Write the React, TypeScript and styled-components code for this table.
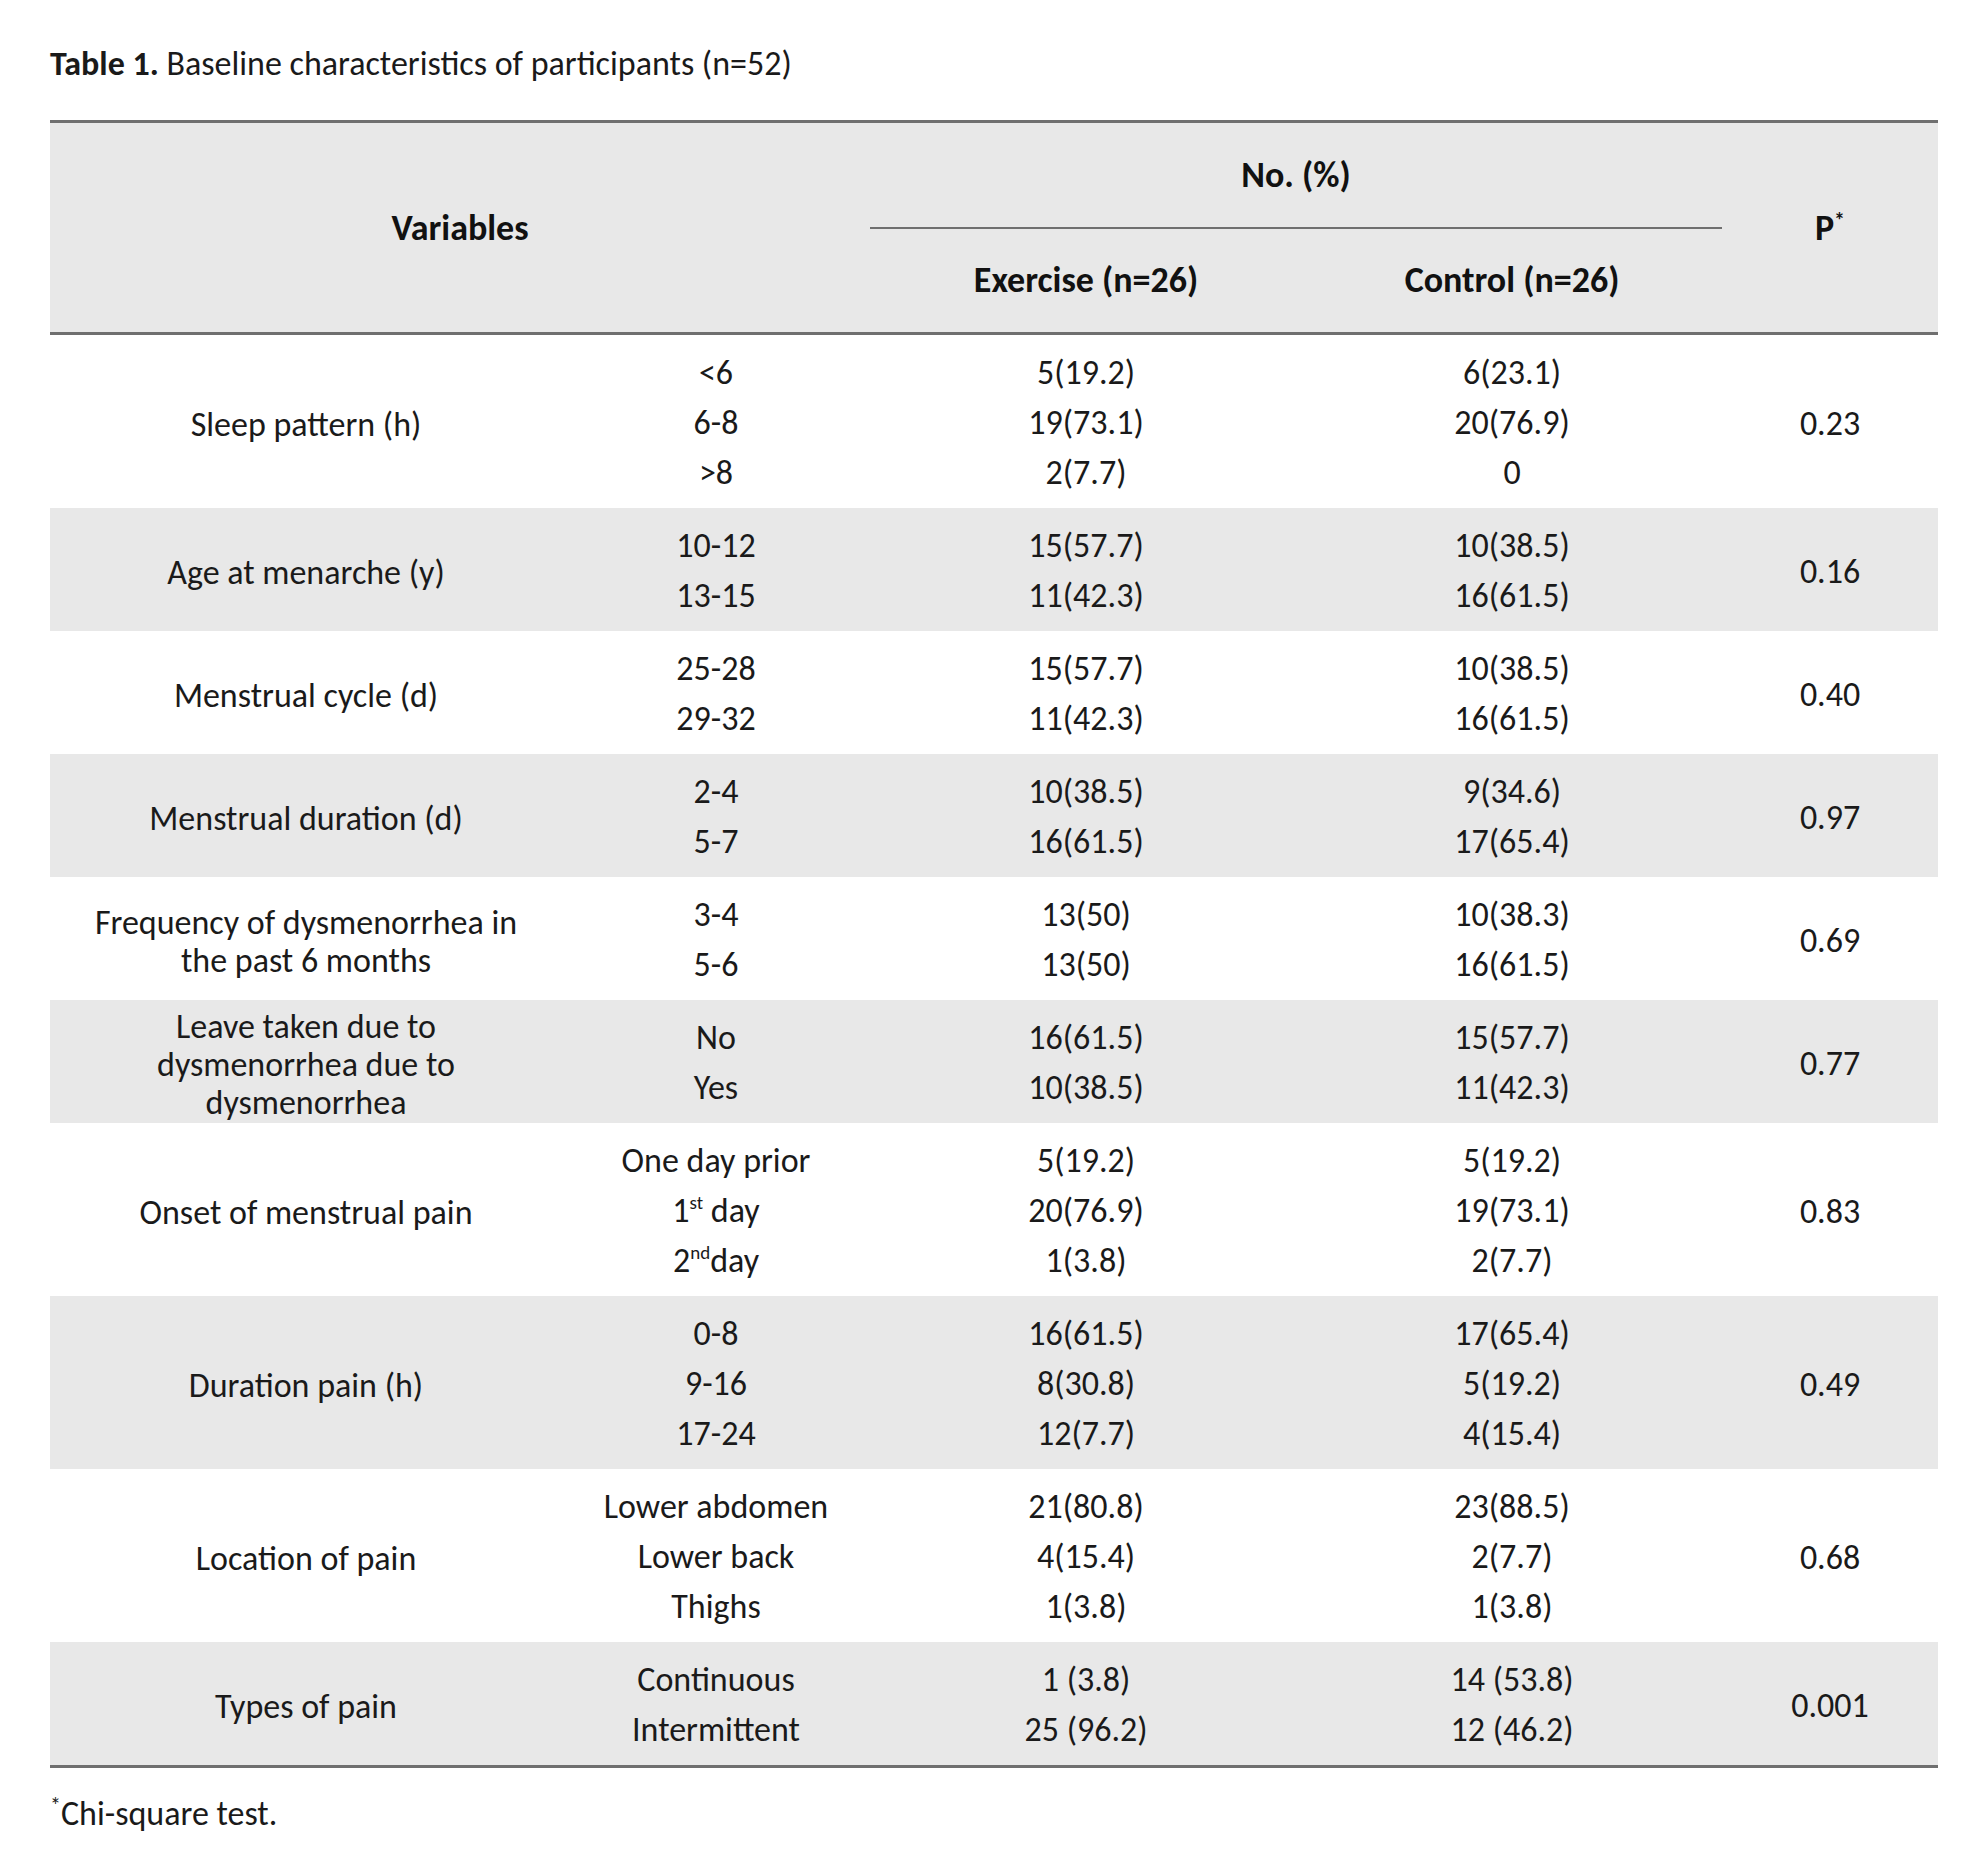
import { createGlobalStyle, styled } from 'styled-components'
import type { ReactNode } from 'react'

const GlobalStyle = createGlobalStyle`
  body {
    margin: 0;
    background: #ffffff;
    font-family: Carlito, Calibri, Lato, "Liberation Sans", sans-serif;
    color: #1a1a1a;
  }
`

const Page = styled.div`
  padding: 44px 0 40px 50px;
  width: 1888px;
`

const Caption = styled.div`
  font-size: 34px;
  line-height: 40px;
  margin-bottom: 36px;
  b {
    font-weight: 700;
  }
`

const Table = styled.table`
  width: 1888px;
  border-collapse: collapse;
  table-layout: fixed;
  font-size: 34px;
`

const HeadRow = styled.tr`
  background: #e8e8e8;
  height: 106px;
`

const Th = styled.th<{ $line?: boolean }>`
  font-weight: 700;
  font-size: 36px;
  text-align: center;
  vertical-align: middle;
  padding: 0;
  color: #111;
  ${(p) => (p.$line ? 'border-bottom: 2px solid #6f6f6f;' : '')}
  sup {
    font-size: 22px;
    vertical-align: 12px;
    line-height: 0;
  }
`

const THead = styled.thead`
  border-top: 3px solid #6f6f6f;
  border-bottom: 3px solid #6f6f6f;
`

const TBody = styled.tbody`
  border-bottom: 3px solid #6f6f6f;
`

const Row = styled.tr<{ $shade: boolean }>`
  background: ${(p) => (p.$shade ? '#e8e8e8' : '#ffffff')};
`

const Td = styled.td<{ $tight?: boolean }>`
  text-align: center;
  vertical-align: middle;
  padding: ${(p) => (p.$tight ? '6px 0 0' : '13px 0 10px')};
  sup {
    font-size: 19px;
    vertical-align: 13px;
    line-height: 0;
  }
`

const VarLine = styled.div`
  line-height: 38px;
`

const Line = styled.div`
  line-height: 50px;
`

const Footnote = styled.div`
  margin-top: 26px;
  font-size: 34px;
  line-height: 40px;
  sup {
    font-size: 22px;
    vertical-align: 12px;
    line-height: 0;
  }
`

type Item = {
  v: string[]
  cats: ReactNode[]
  ex: string[]
  co: string[]
  p: string
}

const rows: Item[] = [
  { v: ['Sleep pattern (h)'], cats: ['<6', '6-8', '>8'], ex: ['5(19.2)', '19(73.1)', '2(7.7)'], co: ['6(23.1)', '20(76.9)', '0'], p: '0.23' },
  { v: ['Age at menarche (y)'], cats: ['10-12', '13-15'], ex: ['15(57.7)', '11(42.3)'], co: ['10(38.5)', '16(61.5)'], p: '0.16' },
  { v: ['Menstrual cycle (d)'], cats: ['25-28', '29-32'], ex: ['15(57.7)', '11(42.3)'], co: ['10(38.5)', '16(61.5)'], p: '0.40' },
  { v: ['Menstrual duration (d)'], cats: ['2-4', '5-7'], ex: ['10(38.5)', '16(61.5)'], co: ['9(34.6)', '17(65.4)'], p: '0.97' },
  { v: ['Frequency of dysmenorrhea in', 'the past 6 months'], cats: ['3-4', '5-6'], ex: ['13(50)', '13(50)'], co: ['10(38.3)', '16(61.5)'], p: '0.69' },
  { v: ['Leave taken due to', 'dysmenorrhea due to', 'dysmenorrhea'], cats: ['No', 'Yes'], ex: ['16(61.5)', '10(38.5)'], co: ['15(57.7)', '11(42.3)'], p: '0.77' },
  {
    v: ['Onset of menstrual pain'],
    cats: ['One day prior', <>1<sup>st</sup> day</>, <>2<sup>nd</sup>day</>],
    ex: ['5(19.2)', '20(76.9)', '1(3.8)'],
    co: ['5(19.2)', '19(73.1)', '2(7.7)'],
    p: '0.83',
  },
  { v: ['Duration pain (h)'], cats: ['0-8', '9-16', '17-24'], ex: ['16(61.5)', '8(30.8)', '12(7.7)'], co: ['17(65.4)', '5(19.2)', '4(15.4)'], p: '0.49' },
  { v: ['Location of pain'], cats: ['Lower abdomen', 'Lower back', 'Thighs'], ex: ['21(80.8)', '4(15.4)', '1(3.8)'], co: ['23(88.5)', '2(7.7)', '1(3.8)'], p: '0.68' },
  { v: ['Types of pain'], cats: ['Continuous', 'Intermittent'], ex: ['1 (3.8)', '25 (96.2)'], co: ['14 (53.8)', '12 (46.2)'], p: '0.001' },
]

function App() {
  return (
    <Page>
      <GlobalStyle />
      <Caption>
        <b>Table 1.</b> Baseline characteristics of participants (n=52)
      </Caption>
      <Table>
        <colgroup>
          <col style={{ width: 512 }} />
          <col style={{ width: 308 }} />
          <col style={{ width: 432 }} />
          <col style={{ width: 420 }} />
          <col style={{ width: 216 }} />
        </colgroup>
        <THead>
          <HeadRow>
            <Th colSpan={2} rowSpan={2}>Variables</Th>
            <Th colSpan={2} $line>No. (%)</Th>
            <Th rowSpan={2}>P<sup>*</sup></Th>
          </HeadRow>
          <HeadRow>
            <Th>Exercise (n=26)</Th>
            <Th>Control (n=26)</Th>
          </HeadRow>
        </THead>
        <TBody>
          {rows.map((r, i) => (
            <Row key={i} $shade={i % 2 === 1}>
              <Td $tight>
                {r.v.map((t, j) => <VarLine key={j}>{t}</VarLine>)}
              </Td>
              <Td>
                {r.cats.map((c, j) => <Line key={j}>{c}</Line>)}
              </Td>
              <Td>
                {r.ex.map((c, j) => <Line key={j}>{c}</Line>)}
              </Td>
              <Td>
                {r.co.map((c, j) => <Line key={j}>{c}</Line>)}
              </Td>
              <Td>{r.p}</Td>
            </Row>
          ))}
        </TBody>
      </Table>
      <Footnote>
        <sup>*</sup>Chi-square test.
      </Footnote>
    </Page>
  )
}

export default App
